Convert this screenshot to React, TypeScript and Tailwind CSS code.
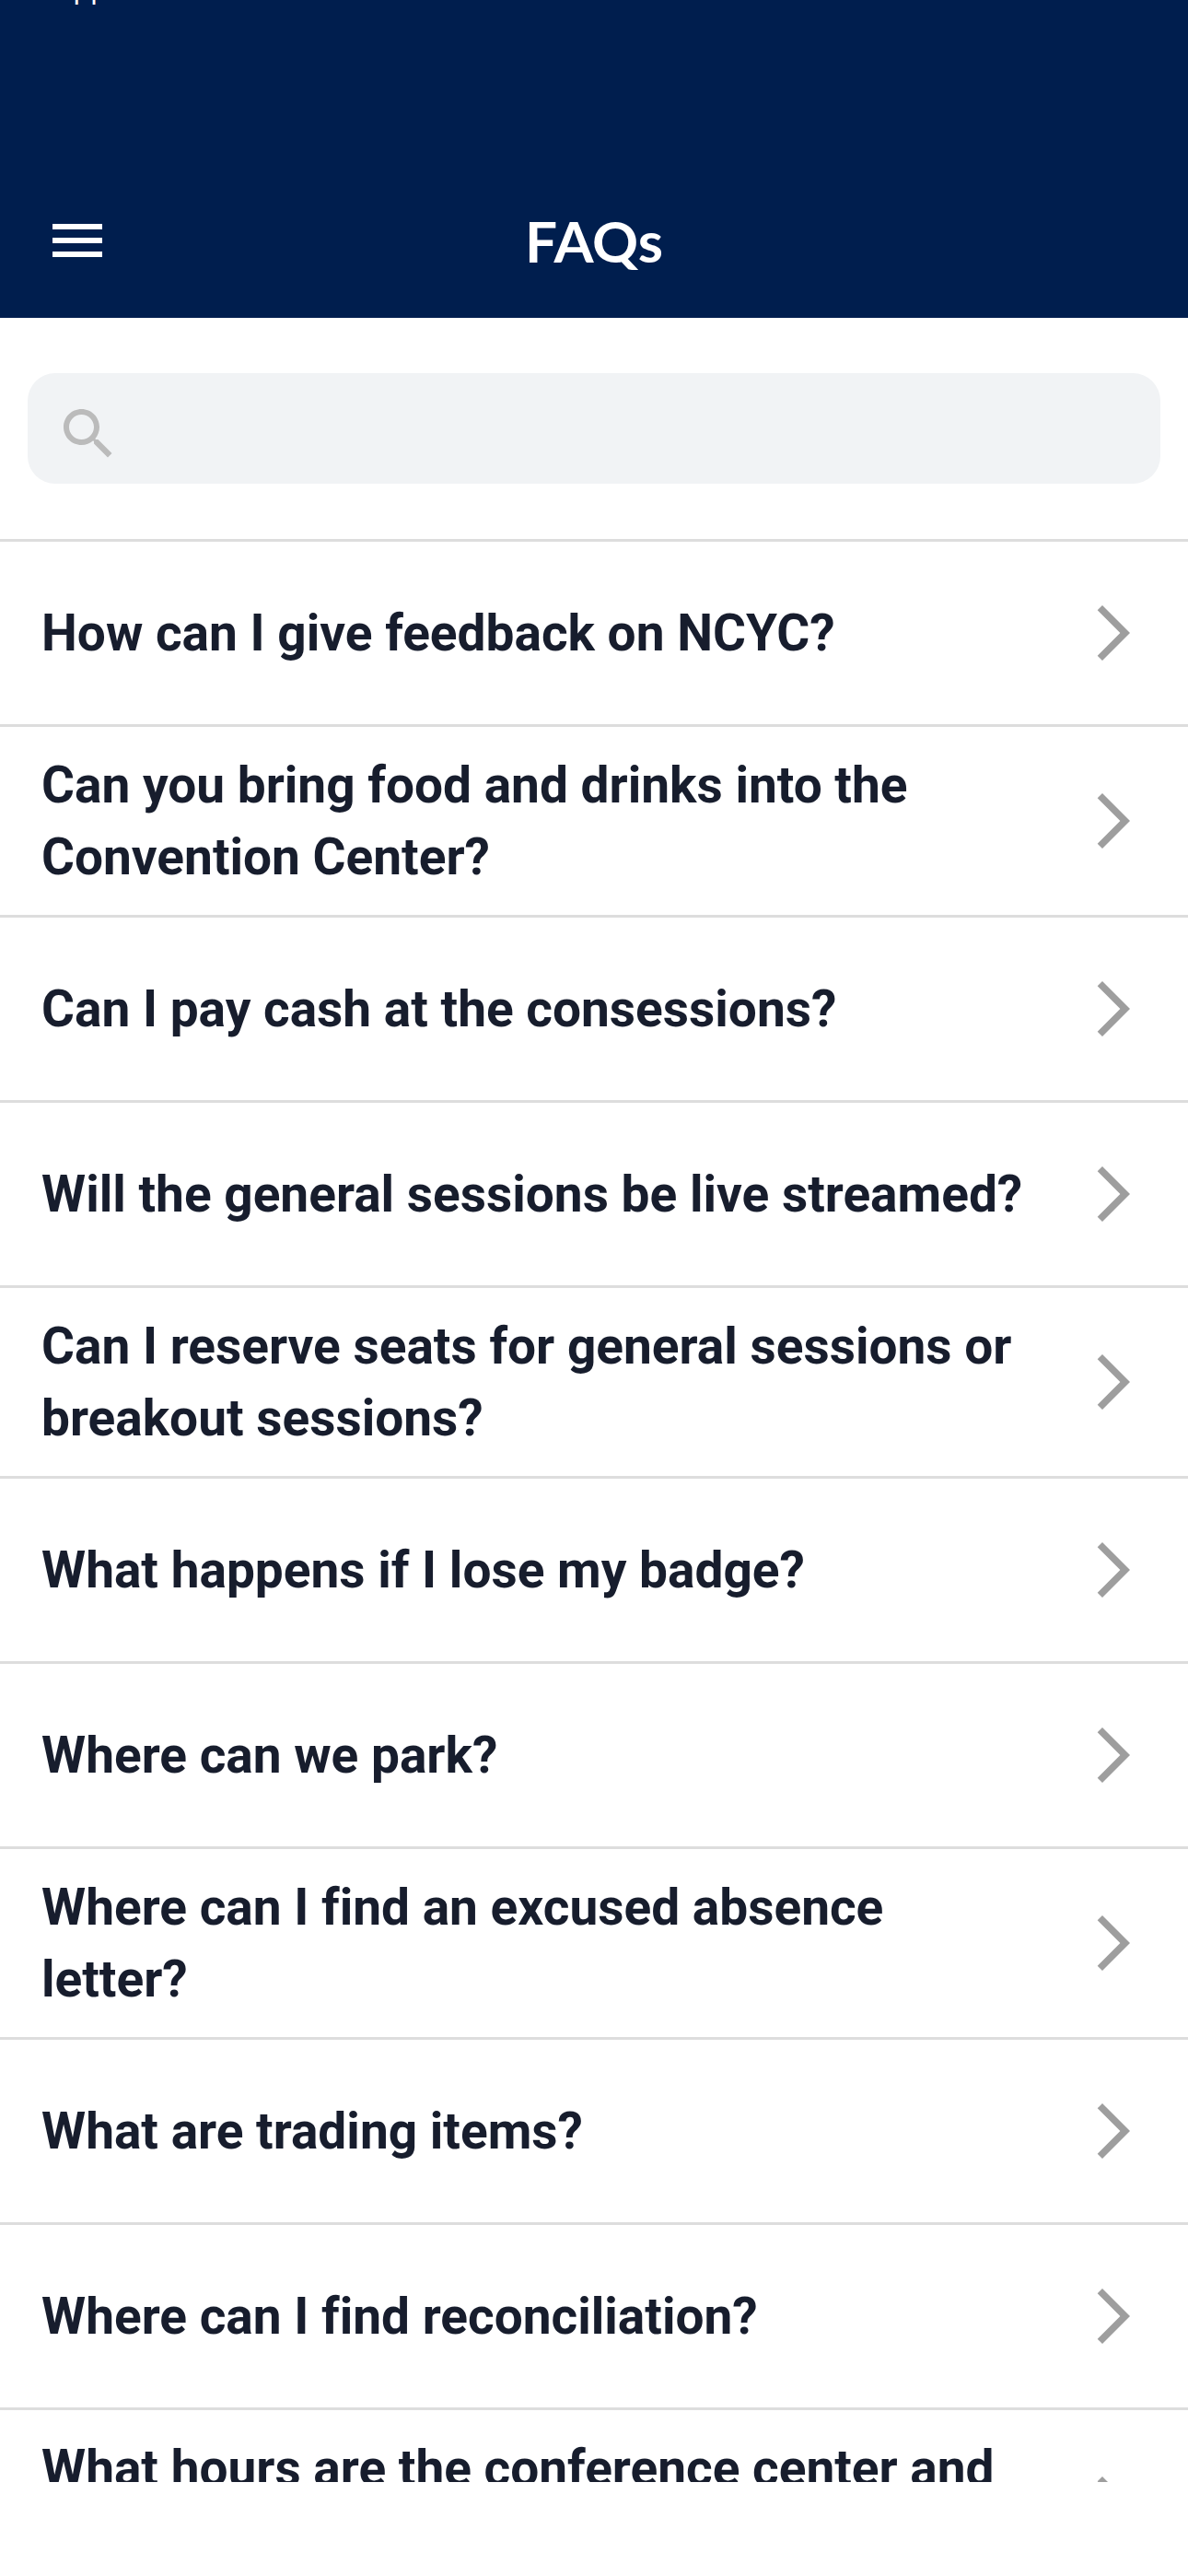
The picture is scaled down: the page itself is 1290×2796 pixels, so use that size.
const questions = [
  "How can I give feedback on NCYC?",
  "Can you bring food and drinks into the Convention Center?",
  "Can I pay cash at the consessions?",
  "Will the general sessions be live streamed?",
  "Can I reserve seats for general sessions or breakout sessions?",
  "What happens if I lose my badge?",
  "Where can we park?",
  "Where can I find an excused absence letter?",
  "What are trading items?",
  "Where can I find reconciliation?",
  "What hours are the conference center and\n\u00a0",
];

function Icon({ d, className }: { d: string; className: string }) {
  return (
    <svg viewBox="0 0 24 24" fill="currentColor" aria-hidden="true" className={`size-[72px] shrink-0 ${className}`}>
      <path d={d} />
    </svg>
  );
}

export default function App() {
  return (
    <div className="flex h-screen flex-col overflow-hidden bg-white pb-[102px] font-['Roboto',sans-serif]">
      <header className="shrink-0 bg-[#001e4e] text-white">
        <div className="flex h-[177px] items-start overflow-hidden pl-[58px]">
          <span className="-mt-8 font-['Inter',sans-serif] text-[31px] leading-[40px]">App Store</span>
        </div>
        <div className="grid h-[168px] grid-cols-[1fr_auto_1fr] items-center px-12">
          <button type="button" aria-label="Menu" className="w-fit">
            <Icon className="text-white" d="M3 18h18v-2H3v2zm0-5h18v-2H3v2zm0-7v2h18V6H3z" />
          </button>
          <h1 className="font-['Lato',sans-serif] text-[62px] leading-[72px] font-bold">FAQs</h1>
        </div>
      </header>
      <main className="min-h-0 flex-1 overflow-hidden">
        <label className="mx-[30px] my-[60px] flex h-[120px] items-center rounded-[30px] bg-[#f1f3f5] px-[30px] text-[#bbbbbb]">
          <Icon className="mt-3" d="M15.5 14h-.79l-.28-.27C15.41 12.59 16 11.11 16 9.5 16 5.91 13.09 3 9.5 3S3 5.91 3 9.5 5.91 16 9.5 16c1.61 0 3.09-.59 4.23-1.57l.27.28v.79l5 4.99L20.49 19l-4.99-5zm-6 0C7.01 14 5 11.99 5 9.5S7.01 5 9.5 5 14 7.01 14 9.5 11.99 14 9.5 14z" />
          <input type="search" aria-label="Search FAQs" className="h-full min-w-0 flex-1 bg-transparent px-6 text-[55px] text-[#171d2d] outline-none" />
        </label>
        <ul>
          {questions.map((question) => (
            <li key={question} className="border-t-[3px] border-[#dddddd]">
              <button type="button" className="flex min-h-[198px] w-full items-center justify-between gap-11 px-[45px] py-6 text-left">
                <span className="text-[55px] leading-[78px] font-bold whitespace-pre-line text-[#171d2d] [font-variant-ligatures:none]">{question}</span>
                <Icon className="text-[#9e9e9e]" d="M6.23 20.23 8 22l10-10L8 2 6.23 3.77 14.46 12z" />
              </button>
            </li>
          ))}
        </ul>
      </main>
    </div>
  );
}
